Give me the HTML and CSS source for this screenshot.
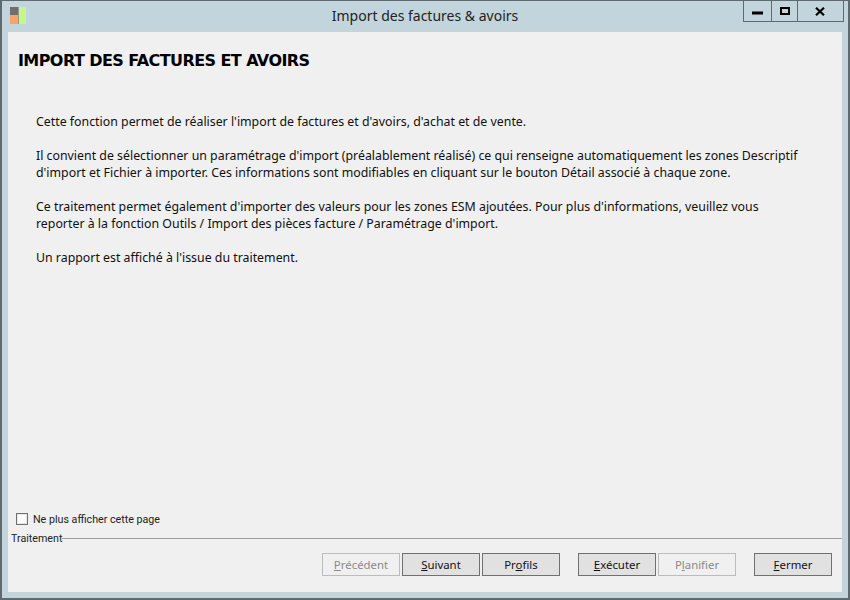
FILE: index.html
```html
<!DOCTYPE html>
<html lang="fr">
<head>
<meta charset="utf-8">
<title>Import des factures &amp; avoirs</title>
<link rel="stylesheet" href="styles.css">
</head>
<body>
<div class="window">
  <header class="titlebar">
    <div class="app-icon">
      <svg width="17" height="18" viewBox="0 0 17 18">
        <rect x="0" y="0" width="8" height="8" fill="#6f6f6f"/>
        <rect x="0" y="8" width="8" height="9" fill="#f9a26c"/>
        <rect x="8" y="0" width="1" height="17" fill="#8f9a80"/>
        <rect x="9" y="0" width="7" height="17" fill="#c8f58c"/>
      </svg>
    </div>
    <div class="title">Import des factures &amp; avoirs</div>
    <div class="controls">
      <div class="ctl ctl-min"><svg width="11" height="4" viewBox="0 0 11 4"><rect width="11" height="3" y="0.5" fill="#000"/></svg></div>
      <div class="ctl ctl-max"><svg width="10" height="8" viewBox="0 0 10 8"><rect x="1" y="1" width="8" height="6" fill="none" stroke="#000" stroke-width="2"/></svg></div>
      <div class="ctl ctl-close"><svg width="10" height="9" viewBox="0 0 10 9"><path d="M1 0.8 9 8.2M9 0.8 1 8.2" stroke="#000" stroke-width="2.2" fill="none"/></svg></div>
    </div>
  </header>
  <main class="client">
    <h1 class="heading">IMPORT DES FACTURES ET AVOIRS</h1>
    <div class="body-text">
      <p>Cette fonction permet de réaliser l'import de factures et d'avoirs, d'achat et de vente.</p>
      <p>Il convient de sélectionner un paramétrage d'import (préalablement réalisé) ce qui renseigne automatiquement les zones Descriptif<br>d'import et Fichier à importer. Ces informations sont modifiables en cliquant sur le bouton Détail associé à chaque zone.</p>
      <p>Ce traitement permet également d'importer des valeurs pour les zones ESM ajoutées. Pour plus d'informations, veuillez vous<br>reporter à la fonction Outils / Import des pièces facture / Paramétrage d'import.</p>
      <p>Un rapport est affiché à l'issue du traitement.</p>
    </div>
    <label class="check-row"><span class="checkbox"></span><span>Ne plus afficher cette page</span></label>
    <div class="group-label"><span>Traitement</span><span class="rule"></span></div>
    <div class="actions">
      <button class="btn" disabled><u>P</u>récédent</button>
      <button class="btn"><u>S</u>uivant</button>
      <button class="btn">Pr<u>o</u>fils</button>
      <button class="btn gap-left"><u>E</u>xécuter</button>
      <button class="btn" disabled>P<u>l</u>anifier</button>
      <button class="btn gap-left"><u>F</u>ermer</button>
    </div>
  </main>
</div>
</body>
</html>
```
FILE: styles.css
```css
* { box-sizing: border-box; }
html, body { margin: 0; padding: 0; }
body {
  width: 850px;
  height: 600px;
  overflow: hidden;
  font-family: "Noto Sans", sans-serif;
  color: #000;
}
.window {
  width: 850px;
  height: 600px;
  display: flex;
  flex-direction: column;
  background: #c2d5dc;
  border: 2px solid #5f6a70;
  border-top-width: 1px;
  padding: 0 6px 6px;
}
.titlebar {
  height: 30px;
  flex: none;
  display: grid;
  grid-template-columns: 1fr auto 1fr;
}
.app-icon { padding: 6px 0 0 2px; height: 24px; }
.app-icon svg { display: block; }
.title {
  font-size: 14px;
  line-height: 30px;
  color: #222;
}
.controls {
  justify-self: end;
  display: flex;
  height: 21px;
  border: 1px solid #5f6a70;
  border-top: 0;
  margin-right: -2px;
}
.ctl {
  display: flex;
  align-items: center;
  justify-content: center;
}
.ctl-min { width: 28px; border-right: 1px solid #5f6a70; padding-top: 3px; }
.ctl-max { width: 26px; border-right: 1px solid #5f6a70; }
.ctl-close { width: 45px; padding-right: 2px; }
.client {
  flex: 1;
  display: flex;
  flex-direction: column;
  background: #f0f0f0;
  border-top: 1px solid #c9d3d6;
}
.heading {
  margin: 19px 0 0 10px;
  font-family: "DejaVu Sans", sans-serif;
  font-size: 16px;
  line-height: 20px;
  font-weight: 700;
  letter-spacing: -0.58px;
}
.body-text {
  flex: 1;
  margin: 42px 0 0 28px;
  font-size: 12.35px;
  line-height: 17px;
  color: #111;
}
.body-text p { margin: 0 0 17px; }
.check-row {
  display: flex;
  align-items: center;
  gap: 5px;
  margin-left: 8px;
  height: 14px;
  font-family: Roboto, sans-serif;
  font-size: 10.7px;
  color: #222;
}
.checkbox {
  width: 12px;
  height: 12px;
  background: #fff;
  border: 1px solid #707070;
  box-shadow: inset 0 0 0 1px #e8e8e8;
}
.group-label {
  display: flex;
  align-items: center;
  margin: 5px 0 0 3px;
  height: 14px;
  font-family: Roboto, sans-serif;
  font-size: 10.7px;
  color: #222;
}
.rule { flex: 1; height: 1px; background: #a0a0a0; }
.actions {
  display: flex;
  gap: 2px;
  margin: 8px 10px 16px 0;
  justify-content: flex-end;
}
.btn {
  width: 78px;
  height: 23px;
  padding: 0 0 1px;
  font: 11.4px "Noto Sans", sans-serif;
  color: #111;
  background: #e1e1e1;
  border: 1px solid #707070;
}
.btn:disabled {
  color: #8a8a8a;
  background: #f0f0f0;
  border-color: #bcbcbc;
}
.gap-left { margin-left: 16px; }
```
